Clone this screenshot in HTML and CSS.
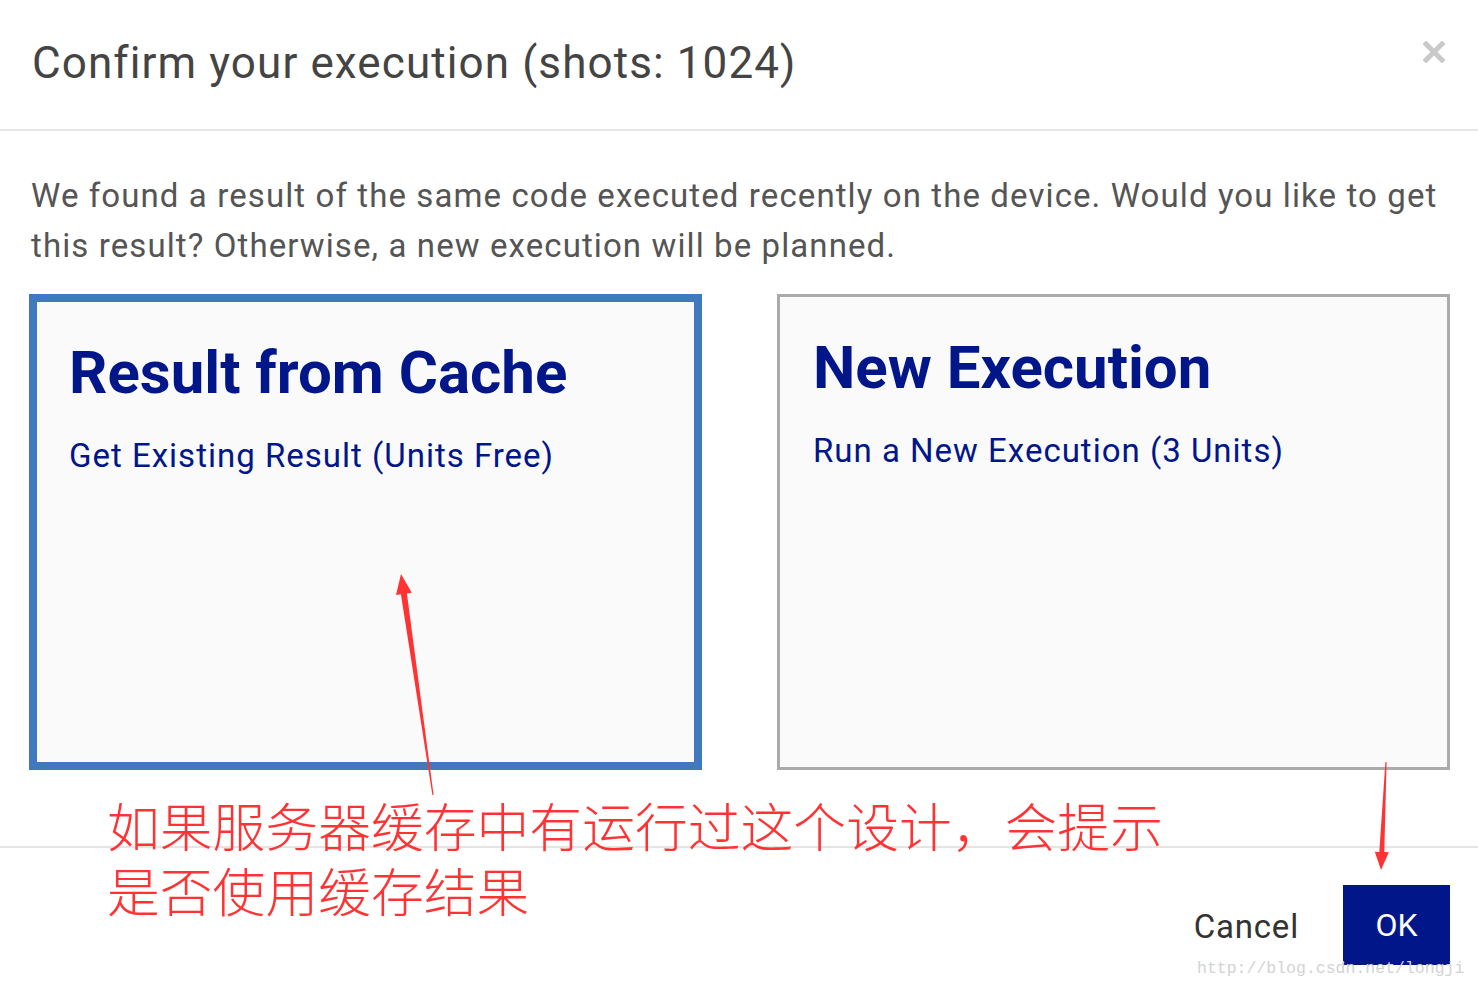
FILE: index.html
```html
<!DOCTYPE html>
<html lang="zh-CN">
<head>
  <meta charset="UTF-8" />
  <title>Confirm your execution</title>
  <link rel="stylesheet" href="styles.css">
</head>
<body>
  <div class="modal">
    <div class="modal-header">
      <h2 class="modal-title">Confirm your execution (shots: 1024)</h2>
      <button class="close" aria-label="Close">
        <svg width="22" height="22" viewBox="0 0 22 22">
          <path d="M3 3 L19 19 M19 3 L3 19" stroke="#c9c9c9" stroke-width="5" stroke-linecap="square" />
        </svg>
      </button>
    </div>

    <div class="modal-body">
      <p class="intro">We found a result of the same code executed recently on the device. Would you like to get this result? Otherwise, a new execution will be planned.</p>

      <div class="choices">
        <div class="choice selected">
          <h3>Result from Cache</h3>
          <p>Get Existing Result (Units Free)</p>
        </div>
        <div class="choice">
          <h3>New Execution</h3>
          <p>Run a New Execution (3 Units)</p>
        </div>
      </div>
    </div>

    <div class="modal-footer">
      <button class="btn-cancel">Cancel</button>
      <button class="btn-ok">OK</button>
    </div>
  </div>

  <div class="note">如果服务器缓存中有运行过这个设计，会提示<br>是否使用缓存结果</div>

  <svg class="arrows" width="1478" height="987" viewBox="0 0 1478 987">
    <polygon fill="#ff3333" points="433.6,795 406.9,593.4 411.8,592.7 401,574 396,594.9 400.9,594.2 432.4,795" />
    <polygon fill="#ff3333" points="1386.6,762 1384.3,852.1 1388.8,852.3 1381,870 1374.8,851.7 1379.3,851.9 1385.4,762" />
  </svg>

  <div class="watermark">http://blog.csdn.net/longji</div>
</body>
</html>
```

FILE: styles.css
```css
body {
  margin: 0;
  background: #fff;
  font-family: Roboto, 'Noto Sans', sans-serif;
  position: relative;
  width: 1478px;
  height: 987px;
  overflow: hidden;
}

.modal {
  display: flex;
  flex-direction: column;
  height: 100%;
}

.modal-header {
  display: flex;
  align-items: center;
  justify-content: space-between;
  height: 129px;
  padding: 0 33px 0 32px;
  border-bottom: 2px solid #e6e6e6;
}

.modal-title {
  margin: -3px 0 0;
  font-size: 44px;
  font-weight: 400;
  letter-spacing: 1.1px;
  color: #444;
  white-space: nowrap;
}

.close {
  background: none;
  border: none;
  padding: 0;
  margin-top: -22px;
  cursor: pointer;
}

.modal-body {
  padding: 40px 28px 0 29px;
}

.intro {
  margin: 0 0 23px 2px;
  font-size: 33px;
  line-height: 50px;
  letter-spacing: 1.1px;
  color: #555;
}

.choices {
  display: flex;
  justify-content: space-between;
}

.choice {
  flex: none;
  width: 673px;
  height: 476px;
  box-sizing: border-box;
  background: #fafafa;
  border: 3px solid #aaa;
  padding: 36px 30px 0 33px;
}

.choice.selected {
  border: 8px solid #4179be;
  padding-left: 32px;
}

.choice h3 {
  margin: 0 0 28px;
  font-size: 60px;
  line-height: 70px;
  font-weight: 700;
  color: #001689;
}

.choice p {
  margin: 0;
  font-size: 33px;
  line-height: 40px;
  letter-spacing: 1px;
  color: #001689;
}

.modal-footer {
  margin-top: 76px;
  border-top: 2px solid #e4e4e4;
  display: flex;
  justify-content: flex-end;
  align-items: center;
  gap: 44px;
  padding: 37px 28px 0 0;
}

.btn-cancel {
  background: none;
  border: none;
  padding: 0;
  font-family: inherit;
  font-size: 33px;
  letter-spacing: 0.8px;
  color: #333;
  margin-top: 2px;
}

.btn-ok {
  width: 107px;
  height: 80px;
  border: none;
  background: #001689;
  color: #fff;
  font-family: inherit;
  font-size: 32px;
}

.note {
  position: absolute;
  left: 107px;
  top: 792px;
  font-family: 'Noto Sans CJK SC', sans-serif;
  font-weight: 300;
  font-size: 52.8px;
  line-height: 65px;
  color: #ff3333;
  white-space: nowrap;
}

.arrows {
  position: absolute;
  left: 0;
  top: 0;
  pointer-events: none;
}

.watermark {
  position: absolute;
  left: 1197px;
  top: 959px;
  font-family: 'Liberation Mono', monospace;
  font-size: 16.5px;
  color: #d3d3d3;
}
```
